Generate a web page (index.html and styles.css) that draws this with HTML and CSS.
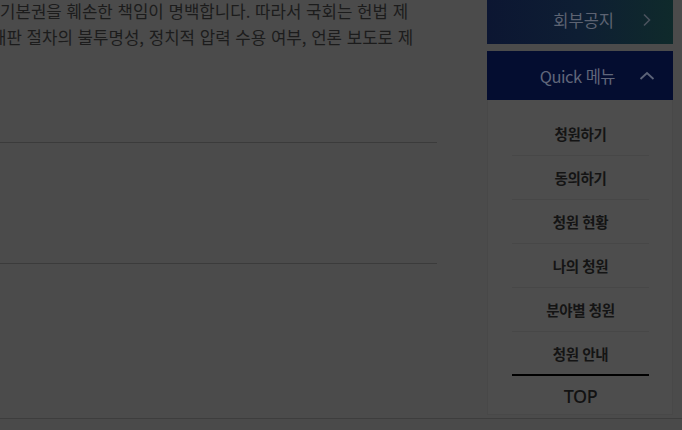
FILE: index.html
```html
<!DOCTYPE html>
<html lang="ko">
<head>
  <meta charset="UTF-8" />
  <meta name="viewport" content="width=device-width, initial-scale=1.0"/>
  <title>청원 상세</title>
  <link rel="stylesheet" href="styles.css">
</head>
<body>
  <div class="page">
    <main class="content">
      <div class="petition-text">
        <p class="line">기본권을 훼손한 책임이 명백합니다. 따라서 국회는 헌법 제</p>
        <p class="line line-cut">재판 절차의 불투명성, 정치적 압력 수용 여부, 언론 보도로 제</p>
      </div>
      <div class="row"></div>
      <div class="row row-last"></div>
    </main>

    <aside class="side">
      <a class="side-btn notice">
        <span>회부공지</span>
        <svg width="10" height="14" viewBox="0 0 10 14"><path d="M2 1.5 L7.5 7 L2 12.5" fill="none" stroke="currentColor" stroke-width="1.6"/></svg>
      </a>
      <a class="side-btn quick">
        <span>Quick 메뉴</span>
        <svg width="16" height="10" viewBox="0 0 16 10"><path d="M1.5 8 L8 2 L14.5 8" fill="none" stroke="currentColor" stroke-width="1.8"/></svg>
      </a>
      <ul class="quick-list">
        <li>청원하기</li>
        <li>동의하기</li>
        <li>청원 현황</li>
        <li>나의 청원</li>
        <li>분야별 청원</li>
        <li class="last">청원 안내</li>
        <li class="top">TOP</li>
      </ul>
    </aside>
  </div>
  <div class="footer"></div>
</body>
</html>
```

FILE: styles.css
```css
html, body {
  margin: 0;
  padding: 0;
}

body {
  font-family: 'Noto Sans CJK KR', 'Noto Sans', sans-serif;
  background: #4b4b4b;
  color: #1c1c1c;
  height: 430px;
  overflow: hidden;
}

.page {
  display: flex;
  height: 418px;
  border-bottom: 1px solid #3d3d3d;
  overflow: hidden;
}

.content {
  width: 437px;
  flex: none;
}

.petition-text {
  height: 145px;
  box-sizing: border-box;
  border-bottom: 1px solid #3b3b3b;
}

.line {
  margin: 0;
  font-size: 16.8px;
  line-height: 26px;
  white-space: nowrap;
  color: #1c1c1c;
}

.line:first-child {
  margin-top: -2px;
}

.line-cut {
  margin-left: -9px;
}

.row {
  height: 120px;
  border-bottom: 1px solid #3b3b3b;
}

.row-last {
  border-bottom: none;
}

.side {
  margin-left: 50px;
  width: 186px;
  flex: none;
}

.side-btn {
  display: flex;
  align-items: center;
  justify-content: flex-end;
  box-sizing: border-box;
  font-size: 16.5px;
}

.notice {
  height: 44px;
  padding: 0 21px 4px 0;
  gap: 28px;
  background: linear-gradient(90deg, #0c1632 0%, #0e1e33 50%, #0f2a2b 100%);
  color: #5d6372;
}

.notice svg {
  color: #4a525e;
}

.quick {
  margin-top: 7px;
  height: 49px;
  padding-right: 18px;
  gap: 24px;
  background: #040d30;
  color: #60667a;
  letter-spacing: -0.5px;
}

.quick svg {
  color: #5c6378;
}

.quick-list {
  list-style: none;
  margin: 0;
  padding: 12px 23px 0 24px;
  height: 315px;
  box-sizing: border-box;
  background: #4d4d4d;
  border: 1px solid #484848;
  border-top: none;
}

.quick-list li {
  height: 44px;
  box-sizing: border-box;
  display: flex;
  align-items: center;
  justify-content: center;
  font-size: 14.5px;
  font-weight: bold;
  letter-spacing: -0.4px;
  color: #141414;
  border-bottom: 1px solid #474747;
}

.quick-list li.last {
  border-bottom: 2px solid #000;
}

.quick-list li.top {
  height: 40px;
  border-bottom: none;
  font-family: 'Noto Sans', sans-serif;
  font-weight: 500;
  font-size: 18px;
  letter-spacing: -0.5px;
  color: #121212;
}

.footer {
  height: 11px;
  background: #4a4a4a;
}
```
